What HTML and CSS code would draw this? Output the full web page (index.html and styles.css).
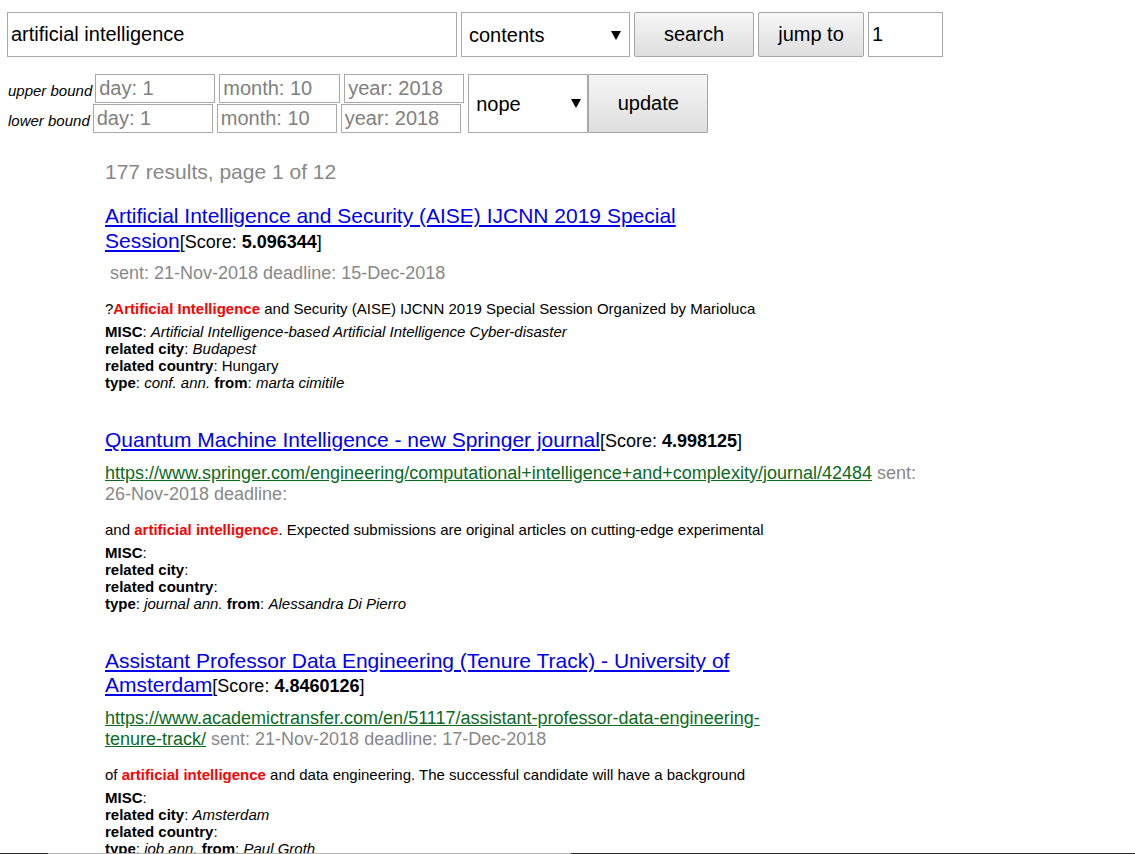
FILE: index.html
```html
<!DOCTYPE html>
<html>
<head>
<meta charset="utf-8">
<link rel="stylesheet" href="styles.css">
</head>
<body>
<form class="searchbar">
  <input class="field query" type="text" value="artificial intelligence">
  <span class="selectwrap wide"><select class="field sel"><option>contents</option></select></span>
  <button class="btn search" type="button">search</button>
  <button class="btn jump" type="button">jump to</button>
  <input class="field page" type="text" value="1">
</form>

<form class="filters">
  <div class="bounds">
    <div class="boundrow">
      <span class="blabel">upper bound</span>
      <input class="field date" type="text" placeholder="day: 1">
      <input class="field date" type="text" placeholder="month: 10">
      <input class="field date" type="text" placeholder="year: 2018">
    </div>
    <div class="boundrow">
      <span class="blabel">lower bound</span>
      <input class="field date" type="text" placeholder="day: 1">
      <input class="field date" type="text" placeholder="month: 10">
      <input class="field date" type="text" placeholder="year: 2018">
    </div>
  </div>
  <span class="selectwrap tall"><select class="field sel"><option>nope</option></select></span>
  <button class="btn update" type="button">update</button>
</form>

<main class="results">
  <p class="count">177 results, page 1 of 12</p>

  <article class="result">
    <div class="title"><a href="#">Artificial Intelligence and Security (AISE) IJCNN 2019 Special<br>Session</a><span class="score">[Score: <b>5.096344</b>]</span></div>
    <div class="meta">&nbsp;sent: 21-Nov-2018 deadline: 15-Dec-2018</div>
    <div class="snippet">?<b class="hl">Artificial Intelligence</b> and Security (AISE) IJCNN 2019 Special Session Organized by Marioluca</div>
    <div class="fields">
      <div><b>MISC</b>: <i>Artificial Intelligence-based Artificial Intelligence Cyber-disaster</i></div>
      <div><b>related city</b>: <i>Budapest</i></div>
      <div><b>related country</b>: Hungary</div>
      <div><b>type</b>: <i>conf. ann.</i> <b>from</b>: <i>marta cimitile</i></div>
    </div>
  </article>

  <article class="result">
    <div class="title"><a href="#">Quantum Machine Intelligence - new Springer journal</a><span class="score">[Score: <b>4.998125</b>]</span></div>
    <div class="meta"><a class="url" href="#">https://www.springer.com/engineering/computational+intelligence+and+complexity/journal/42484</a> sent: 26-Nov-2018 deadline:</div>
    <div class="snippet">and <b class="hl">artificial intelligence</b>. Expected submissions are original articles on cutting-edge experimental</div>
    <div class="fields">
      <div><b>MISC</b>:</div>
      <div><b>related city</b>:</div>
      <div><b>related country</b>:</div>
      <div><b>type</b>: <i>journal ann.</i> <b>from</b>: <i>Alessandra Di Pierro</i></div>
    </div>
  </article>

  <article class="result">
    <div class="title"><a href="#">Assistant Professor Data Engineering (Tenure Track) - University of<br>Amsterdam</a><span class="score">[Score: <b>4.8460126</b>]</span></div>
    <div class="meta"><a class="url" href="#">https://www.academictransfer.com/en/51117/assistant-professor-data-engineering-<br>tenure-track/</a> sent: 21-Nov-2018 deadline: 17-Dec-2018</div>
    <div class="snippet">of <b class="hl">artificial intelligence</b> and data engineering. The successful candidate will have a background</div>
    <div class="fields">
      <div><b>MISC</b>:</div>
      <div><b>related city</b>: <i>Amsterdam</i></div>
      <div><b>related country</b>:</div>
      <div><b>type</b>: <i>job ann.</i> <b>from</b>: <i>Paul Groth</i></div>
    </div>
  </article>
</main>

<div class="edge"></div>
</body>
</html>
```

FILE: styles.css
```css
html, body {
  background: #fff;
}
body {
  margin: 12px 7px 0 7px;
  font-family: "Liberation Sans", Arial, sans-serif;
  color: #000;
}

.field {
  box-sizing: border-box;
  font-family: "Liberation Sans", Arial, sans-serif;
  font-size: 20px;
  color: #000;
  background: #fff;
  border: 1px solid #a9a9a9;
  border-radius: 0;
  margin: 0;
  outline: none;
}
.field::placeholder {
  color: #808080;
  opacity: 1;
}

.searchbar {
  display: flex;
  gap: 4px;
  height: 45px;
  margin: 0;
}
.query {
  width: 450px;
  height: 45px;
  padding: 0 3px;
}
.page {
  width: 75px;
  height: 45px;
  padding: 0 3px;
}

.selectwrap {
  position: relative;
  display: block;
}
.selectwrap::after {
  content: "";
  position: absolute;
  top: 50%;
  right: 9px;
  margin-top: -4px;
  border-left: 5px solid transparent;
  border-right: 5px solid transparent;
  border-top: 9px solid #000;
  pointer-events: none;
}
.sel {
  appearance: none;
  -webkit-appearance: none;
  height: 100%;
  padding: 0 7px;
}
.wide .sel { width: 169px; height: 45px; }
.tall .sel { width: 120px; height: 59px; padding-left: 7px; }
.tall::after { right: 7px; margin-top: -5px; }

.btn {
  box-sizing: border-box;
  font-family: "Liberation Sans", Arial, sans-serif;
  font-size: 20px;
  color: #000;
  border: 1px solid #a6a6a6;
  border-radius: 2px;
  background: linear-gradient(#f6f6f6, #dedede);
  margin: 0;
  padding: 0;
  height: 45px;
}
.search { width: 120px; }
.jump { width: 106px; }
.update { width: 120px; height: 59px; border-radius: 1px; }

.filters {
  display: flex;
  align-items: flex-start;
  margin: 17px 0 0 0;
}
.bounds {
  display: flex;
  flex-direction: column;
  margin-right: 4px;
}
.boundrow {
  display: flex;
  align-items: flex-end;
  gap: 4px;
  height: 29px;
}
.boundrow + .boundrow {
  height: 30px;
}
.blabel {
  font-style: italic;
  font-size: 15px;
  line-height: 17px;
  padding: 0 0 4px 1px;
  margin-right: -1px;
}
.date {
  width: 120px;
  height: 29px;
  padding: 0 3px;
}
.boundrow:first-child .date:nth-child(3) { width: 121px; }

.results {
  margin-left: 98px;
  width: 820px;
}
.count {
  margin: 27px 0 0 0;
  font-size: 21px;
  line-height: 24px;
  color: #888;
}

.result {
  margin-top: 20px;
  margin-bottom: 37px;
}
.result + .result {
  margin-top: 0;
}
.title {
  font-size: 21px;
  line-height: 24.5px;
}
.title a {
  color: #0000ee;
  text-decoration: underline;
}
.score {
  font-size: 18px;
  color: #000;
}
.meta {
  margin-top: 9px;
  font-size: 18px;
  line-height: 21px;
  color: #888;
}
.url {
  color: #0a6a1f;
  text-decoration: underline;
}
.snippet {
  margin-top: 16px;
  font-size: 15px;
  line-height: 17px;
}
.hl {
  color: #ff0000;
}
.fields {
  margin-top: 6px;
  font-size: 15px;
  line-height: 17px;
}

.edge {
  position: fixed;
  left: 0;
  right: 0;
  bottom: 0;
  height: 1px;
  background: linear-gradient(to right, #2b2b2b 0, #2b2b2b 48px, #b4b4b4 48px, #b4b4b4 571px, #2b2b2b 571px);
}
```
